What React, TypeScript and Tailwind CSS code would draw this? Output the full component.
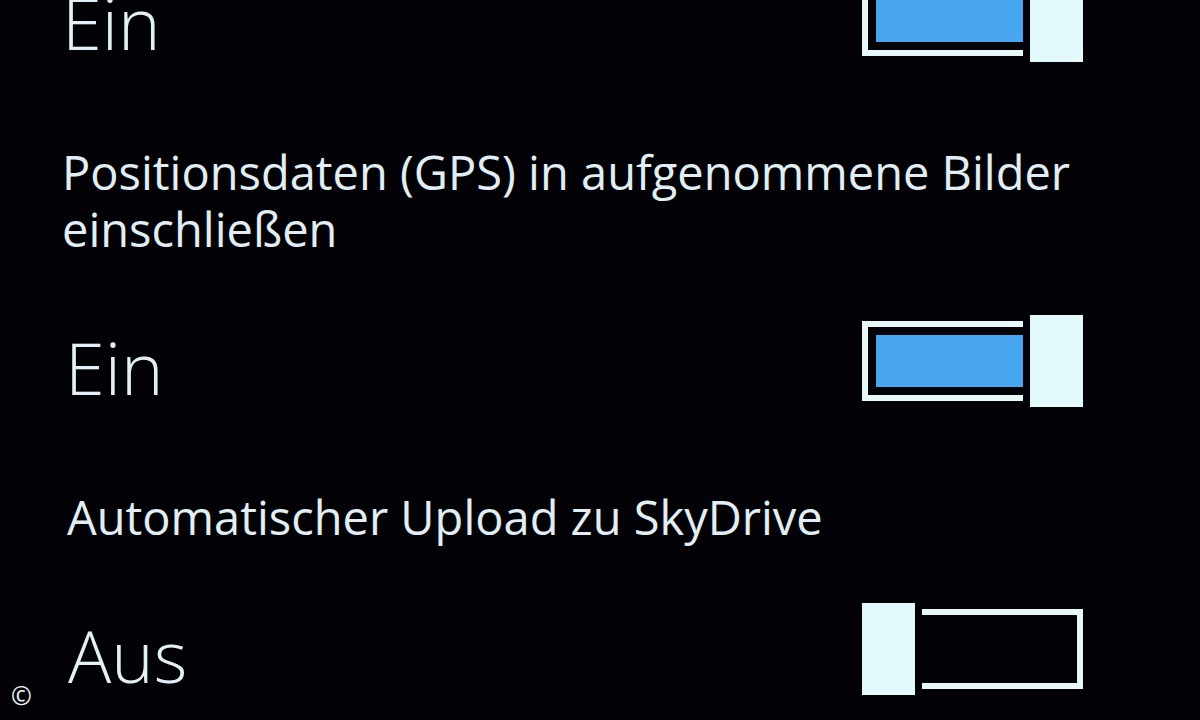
type ToggleProps = { on: boolean };

// Windows Phone style toggle: open frame + solid thumb
function Toggle({ on }: ToggleProps) {
  const thumb = <div className="h-[92px] w-[53px] shrink-0 bg-[#e3fafd]" />;
  if (on) {
    return (
      <div className="flex items-center gap-[7px]">
        <div className="h-[80px] w-[161px] border-[6px] border-r-0 border-[#e8f7fa] py-[8px] pl-[8px]">
          <div className="h-full w-full bg-[#47a6ef]" />
        </div>
        {thumb}
      </div>
    );
  }
  return (
    <div className="flex items-center gap-[7px]">
      {thumb}
      <div className="h-[80px] w-[161px] border-[6px] border-l-0 border-[#e8f7fa] bg-[#030307]" />
    </div>
  );
}

function ValueRow({ label, on }: { label: string; on: boolean }) {
  return (
    <div className="flex h-[92px] items-end justify-between">
      <span className="pb-[4px] text-[72px] font-[350] leading-[72px] text-[#e3f1f7]">{label}</span>
      <Toggle on={on} />
    </div>
  );
}

function Caption({ children, className = "" }: { children: React.ReactNode; className?: string }) {
  return (
    <p className={`mt-[82px] w-[1060px] text-[47px] font-normal leading-[57px] text-[#e1eff5] ${className}`}>
      {children}
    </p>
  );
}

export default function App() {
  return (
    <div className="relative h-[720px] w-[1200px] overflow-hidden bg-[#030307] font-['Open_Sans','Noto_Sans',sans-serif]">
      <div className="-mt-[30px] flex flex-col pl-[62px] pr-[117px]">
        <ValueRow label="Ein" on />
        <Caption>Positionsdaten (GPS) in aufgenommene Bilder einschließen</Caption>
        <div className="mt-[57px] pl-[3px]">
          <ValueRow label="Ein" on />
        </div>
        <Caption className="pl-[5px]">Automatischer Upload zu SkyDrive</Caption>
        <div className="mt-[57px] pl-[6px]">
          <ValueRow label="Aus" on={false} />
        </div>
      </div>
      <span className="absolute bottom-[12px] left-[11px] text-[25px] leading-none text-[#eef6f9]">©</span>
    </div>
  );
}
